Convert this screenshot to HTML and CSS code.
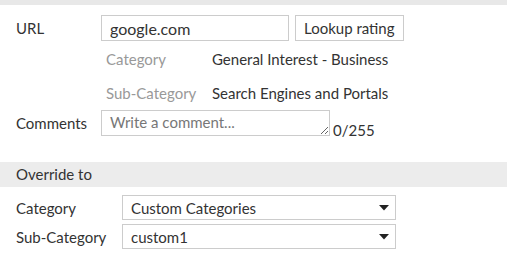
FILE: index.html
```html
<!DOCTYPE html>
<html lang="en">
  <head>
    <meta charset="UTF-8" />
    <title>URL Rating Override</title>
    <link rel="stylesheet" href="styles.css">
  </head>
  <body>
    <div class="top-bar"></div>
    <form class="panel">
      <div class="row url-row">
        <label class="label">URL</label>
        <input type="text" class="url-input" value="google.com" />
        <button type="button" class="lookup">Lookup rating</button>
      </div>

      <div class="info">
        <div class="info-row">
          <span class="info-label">Category</span>
          <span class="info-value">General Interest - Business</span>
        </div>
        <div class="info-row">
          <span class="info-label">Sub-Category</span>
          <span class="info-value">Search Engines and Portals</span>
        </div>
      </div>

      <div class="row comments-row">
        <label class="label">Comments</label>
        <div class="comment-box">
          <textarea placeholder="Write a comment..."></textarea><span class="counter">0/255</span>
        </div>
      </div>
    </form>

    <div class="section-head">Override to</div>

    <div class="panel override">
      <div class="row select-row">
        <label class="label wide">Category</label>
        <div class="select">
          <span>Custom Categories</span>
          <svg width="10" height="6" viewBox="0 0 10 6"><path d="M0 0h10L5 5.5z" fill="#222"/></svg>
        </div>
      </div>
      <div class="row select-row">
        <label class="label wide">Sub-Category</label>
        <div class="select">
          <span>custom1</span>
          <svg width="10" height="6" viewBox="0 0 10 6"><path d="M0 0h10L5 5.5z" fill="#222"/></svg>
        </div>
      </div>
    </div>
  </body>
</html>
```

FILE: styles.css
```css
body {
  font-family: Lato, "Open Sans", sans-serif;
  font-size: 15px;
  color: #333;
  background: white;
  margin: 0;
}

.top-bar {
  height: 5px;
  background: #e8e8e8;
}

.panel {
  padding: 0 16px;
  margin: 0;
}

.row {
  display: flex;
  align-items: center;
}

.url-row {
  margin-top: 10px;
}

.label {
  width: 85px;
  flex-shrink: 0;
}

.label.wide {
  width: 106px;
}

.url-input {
  box-sizing: border-box;
  width: 188px;
  height: 26px;
  border: 1px solid #ccc;
  padding: 0 8px;
  font: inherit;
  font-size: 16px;
  color: #333;
  outline: none;
}

.lookup {
  box-sizing: border-box;
  height: 26px;
  margin-left: 6px;
  padding: 0 8px;
  border: 1px solid #ccc;
  background: white;
  font: inherit;
  color: #333;
}

.info {
  margin-left: 90px;
  padding-top: 1px;
}

.info-row {
  display: flex;
  align-items: center;
  height: 34px;
}

.info-label {
  width: 106px;
  color: #999;
}

.info-value {
  color: #333;
}

.comments-row {
  margin-top: 0;
}

.comment-box {
  display: flex;
  align-items: flex-end;
}

textarea {
  box-sizing: border-box;
  width: 229px;
  height: 26px;
  border: 1px solid #ccc;
  padding: 2px 8px;
  font: inherit;
  color: #333;
  resize: vertical;
  outline: none;
  margin: 0;
  display: block;
}

textarea::placeholder {
  color: #777;
}

.counter {
  margin-left: 3px;
  line-height: 15px;
  margin-bottom: -2px;
}

.section-head {
  margin-top: 26px;
  height: 25px;
  line-height: 25px;
  padding-left: 16px;
  background: #ececec;
}

.override {
  padding-top: 8px;
}

.select-row + .select-row {
  margin-top: 4px;
}

.select {
  box-sizing: border-box;
  width: 274px;
  height: 25px;
  border: 1px solid #ccc;
  padding: 0 6px 0 8px;
  display: flex;
  align-items: center;
  justify-content: space-between;
}
```
